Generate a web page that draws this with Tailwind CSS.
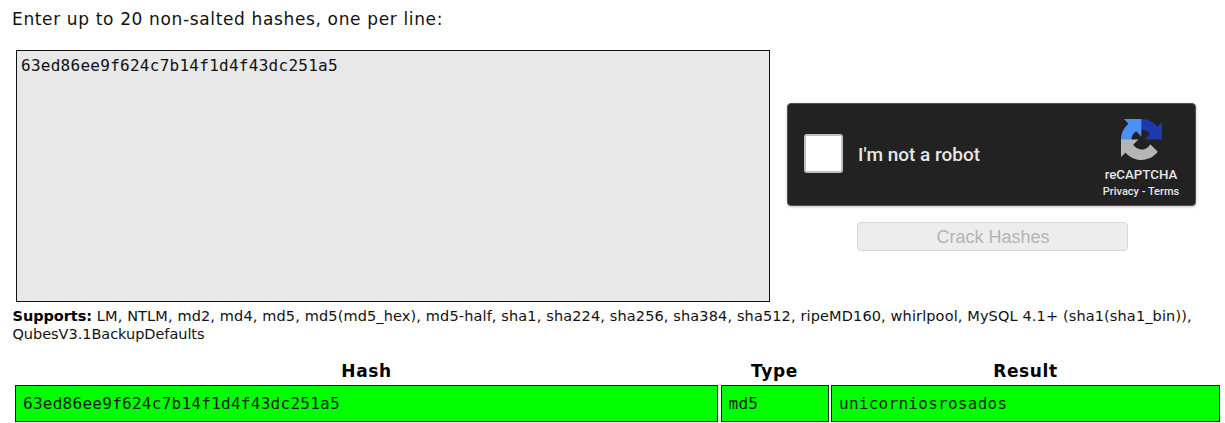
<!DOCTYPE html>
<html lang="en">
<head>
<meta charset="utf-8">
<title>Hash Cracker</title>
<script src="https://cdn.jsdelivr.net/npm/@tailwindcss/browser@4"></script>
</head>
<body class="bg-white text-black w-[1225px] h-[423px] overflow-hidden font-['DejaVu_Sans',sans-serif]">
<main class="flex flex-col">
  <p class="pl-[12px] pt-[9px] h-[50px] text-[17px] leading-[20px] tracking-[0.64px] whitespace-nowrap text-[#111]">Enter up to 20 non-salted hashes, one per line:</p>
  <section class="flex pl-[16px] h-[252px]">
    <div class="w-[754px] h-[252px] border-[1.5px] border-[#111] bg-[#e8e8e8] pl-[4px] pt-[5px] font-['DejaVu_Sans_Mono',monospace] text-[16px] leading-[20px] tracking-[0.27px] text-[#111]">63ed86ee9f624c7b14f1d4f43dc251a5</div>
    <div class="ml-[17px] mt-[53px] w-[409px] flex flex-col items-center">
      <div class="w-[409px] h-[103px] shrink-0 rounded-[4px] bg-[#222] border border-[#525252] shadow-[0_1px_3px_rgba(0,0,0,0.25)] flex items-center pl-[16px] font-[Roboto,sans-serif] text-[#e6e6e6]">
        <div class="w-[39px] h-[39px] mt-[-3px] bg-white border-[2.5px] border-[#c1c1c1] rounded-[3px]"></div>
        <span class="ml-[15px] w-[200px] text-[19px] leading-[24px] font-medium whitespace-nowrap">I'm not a robot</span>
        <div class="ml-[33px] w-[100px] h-full flex flex-col items-center pt-[15px]">
          <svg class="w-[41px] h-[41px]" viewBox="0 0 64 64"><path fill="#1c3aa9" d="M64 31.955l-.033-1.37V4.687l-7.16 7.16C50.948 4.674 42.033.093 32.05.093c-10.4 0-19.622 4.96-25.458 12.64l11.736 11.86a15.55 15.55 0 0 1 4.754-5.334c2.05-1.6 4.952-2.906 8.968-2.906.485 0 .86.057 1.135.163 4.976.393 9.288 3.14 11.828 7.124l-8.307 8.307L64 31.953"/><path fill="#4a90f5" d="M31.862.094l-1.37.033H4.594l7.16 7.16C4.58 13.147 0 22.06 0 32.046c0 10.4 4.96 19.622 12.64 25.458L24.5 45.768a15.56 15.56 0 0 1-5.334-4.754c-1.6-2.05-2.906-4.952-2.906-8.968 0-.485.057-.86.163-1.135.393-4.976 3.14-9.288 7.124-11.828l8.307 8.307L31.86.095"/><path fill="#b5b5b5" d="M.001 32.045l.033 1.37v25.898l7.16-7.16c5.86 7.173 14.774 11.754 24.76 11.754 10.4 0 19.622-4.96 25.458-12.64l-11.736-11.86a15.55 15.55 0 0 1-4.754 5.334c-2.05 1.6-4.952 2.906-8.968 2.906-.485 0-.86-.057-1.135-.163-4.976-.393-9.288-3.14-11.828-7.124l8.307-8.307c-10.522.04-22.4.066-27.295-.005"/></svg>
          <span class="mt-[7px] text-[13.3px] leading-[16px] font-medium">reCAPTCHA</span>
          <span class="mt-[2px] text-[11px] leading-[14px] font-medium whitespace-nowrap">Privacy - Terms</span>
        </div>
      </div>
      <button class="mt-[16px] ml-px pl-[2px] w-[271px] h-[29px] shrink-0 border-[1.5px] border-[#d8d8d8] rounded-[4px] bg-[#ededed] text-[#b4b4b4] font-['Liberation_Sans',sans-serif] text-[18px] leading-[24px]">Crack Hashes</button>
    </div>
  </section>
  <p class="pl-[12.5px] pt-[5px] h-[56px] text-[14.5px] leading-[18px] whitespace-nowrap text-[#111]"><b class="text-black tracking-[-0.05px]">Supports:</b><span class="tracking-[0.13px]"> LM, NTLM, md2, md4, md5, md5(md5_hex), md5-half, sha1, sha224, sha256, sha384, sha512, ripeMD160, whirlpool, MySQL 4.1+ (sha1(sha1_bin)),</span><br><span class="tracking-[-0.04px]">QubesV3.1BackupDefaults</span></p>
  <section class="pl-[15px] grid grid-cols-[703px_108px_389px] gap-x-[2.5px]">
    <div class="h-[27px] pt-[3px] text-center font-bold text-[17px] leading-[20px] tracking-[0.6px]">Hash</div>
    <div class="h-[27px] pt-[3px] text-center font-bold text-[17px] leading-[20px] tracking-[0.6px]">Type</div>
    <div class="h-[27px] pt-[3px] text-center font-bold text-[17px] leading-[20px] tracking-[0.6px]">Result</div>
    <div class="h-[37px] border-[1.5px] border-[#052b05] bg-[#00ff00] pl-[7px] font-['DejaVu_Sans_Mono',monospace] text-[16px] leading-[36px] tracking-[0.27px] text-[#031f03]">63ed86ee9f624c7b14f1d4f43dc251a5</div>
    <div class="h-[37px] border-[1.5px] border-[#052b05] bg-[#00ff00] pl-[7px] font-['DejaVu_Sans_Mono',monospace] text-[16px] leading-[36px] tracking-[0.27px] text-[#031f03]">md5</div>
    <div class="h-[37px] border-[1.5px] border-[#052b05] bg-[#00ff00] pl-[7px] font-['DejaVu_Sans_Mono',monospace] text-[16px] leading-[36px] tracking-[0.27px] text-[#031f03]">unicorniosrosados</div>
  </section>
</main>
</body>
</html>
